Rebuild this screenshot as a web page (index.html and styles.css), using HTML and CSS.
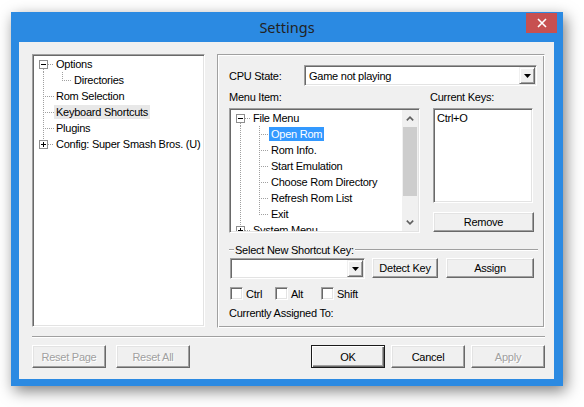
FILE: index.html
```html
<!DOCTYPE html>
<html>
<head>
<meta charset="utf-8">
<title>Settings</title>
<link rel="stylesheet" href="styles.css">
</head>
<body>
<div class="page">
  <div class="window">
    <div class="titlebar">
      <div></div>
      <div class="title">Settings</div>
      <div class="close"><svg width="10" height="10" viewBox="0 0 10 10"><path d="M1 1L9 9M9 1L1 9" stroke="#fff" stroke-width="1.6"/></svg></div>
    </div>
    <div class="client">
      <div class="top">
        <div class="tree sunken">
          <div class="node"><svg class="gut" width="20" height="16"><path class="dot" d="M9.5 13V16M14 8.5H20"/><rect class="box" x="5.5" y="4.5" width="8" height="8"/><path class="sign" d="M7 8.5H12"/></svg><span class="lbl">Options</span></div>
          <div class="node"><svg class="gut" width="38" height="16"><path class="dot" d="M9.5 0V16M28.5 0V8.5M30 8.5H38"/></svg><span class="lbl">Directories</span></div>
          <div class="node"><svg class="gut" width="20" height="16"><path class="dot" d="M9.5 0V16M11 8.5H20"/></svg><span class="lbl">Rom Selection</span></div>
          <div class="node"><svg class="gut" width="20" height="16"><path class="dot" d="M9.5 0V16M11 8.5H20"/></svg><span class="lbl hot">Keyboard Shortcuts</span></div>
          <div class="node"><svg class="gut" width="20" height="16"><path class="dot" d="M9.5 0V16M11 8.5H20"/></svg><span class="lbl">Plugins</span></div>
          <div class="node"><svg class="gut" width="20" height="16"><path class="dot" d="M9.5 0V4M14 8.5H20"/><rect class="box" x="5.5" y="4.5" width="8" height="8"/><path class="sign" d="M7 8.5H12M9.5 6V11"/></svg><span class="lbl">Config: Super Smash Bros. (U)</span></div>
        </div>
        <div class="group">
          <div class="cpu-row">
            <span class="cpu-label">CPU State:</span>
            <div class="combo sunken cpu-combo">
              <span class="combo-text">Game not playing</span>
              <div class="drop"><svg width="7" height="4" viewBox="0 0 7 4"><path d="M0 0H7L3.5 4Z" fill="#000"/></svg></div>
            </div>
          </div>
          <div class="mid-row">
            <div class="menu-col">
              <div class="label">Menu Item:</div>
              <div class="mtree sunken">
                <div class="mtree-body">
                  <div class="node"><svg class="gut" width="20" height="16"><path class="dot" d="M9.5 13V16M14 8.5H20"/><rect class="box" x="5.5" y="4.5" width="8" height="8"/><path class="sign" d="M7 8.5H12"/></svg><span class="lbl">File Menu</span></div>
                  <div class="node"><svg class="gut" width="38" height="16"><path class="dot" d="M9.5 0V16M28.5 0V16M30 8.5H38"/></svg><span class="lbl sel">Open Rom</span></div>
                  <div class="node"><svg class="gut" width="38" height="16"><path class="dot" d="M9.5 0V16M28.5 0V16M30 8.5H38"/></svg><span class="lbl">Rom Info.</span></div>
                  <div class="node"><svg class="gut" width="38" height="16"><path class="dot" d="M9.5 0V16M28.5 0V16M30 8.5H38"/></svg><span class="lbl">Start Emulation</span></div>
                  <div class="node"><svg class="gut" width="38" height="16"><path class="dot" d="M9.5 0V16M28.5 0V16M30 8.5H38"/></svg><span class="lbl">Choose Rom Directory</span></div>
                  <div class="node"><svg class="gut" width="38" height="16"><path class="dot" d="M9.5 0V16M28.5 0V16M30 8.5H38"/></svg><span class="lbl">Refresh Rom List</span></div>
                  <div class="node"><svg class="gut" width="38" height="16"><path class="dot" d="M9.5 0V16M28.5 0V8.5M30 8.5H38"/></svg><span class="lbl">Exit</span></div>
                  <div class="node"><svg class="gut" width="20" height="16"><path class="dot" d="M9.5 0V4M9.5 13V16M14 8.5H20"/><rect class="box" x="5.5" y="4.5" width="8" height="8"/><path class="sign" d="M7 8.5H12M9.5 6V11"/></svg><span class="lbl">System Menu</span></div>
                </div>
                <div class="vscroll">
                  <div class="arrow"><svg width="8" height="5" viewBox="0 0 8 5"><path d="M0.8 4.4L4 1.2L7.2 4.4" fill="none" stroke="#606060" stroke-width="1.6"/></svg></div>
                  <div class="track"><div class="thumb"></div></div>
                  <div class="arrow"><svg width="8" height="5" viewBox="0 0 8 5"><path d="M0.8 0.6L4 3.8L7.2 0.6" fill="none" stroke="#606060" stroke-width="1.6"/></svg></div>
                </div>
              </div>
            </div>
            <div class="keys-col">
              <div class="label">Current Keys:</div>
              <div class="listbox sunken"><div class="item">Ctrl+O</div></div>
              <button class="btn remove">Remove</button>
            </div>
          </div>
          <div class="legend">
            <span class="etch dash"></span>
            <span class="legend-text">Select New Shortcut Key:</span>
            <span class="etch fill"></span>
          </div>
          <div class="key-row">
            <div class="combo sunken key-combo">
              <span class="combo-text"></span>
              <div class="drop"><svg width="7" height="4" viewBox="0 0 7 4"><path d="M0 0H7L3.5 4Z" fill="#000"/></svg></div>
            </div>
            <button class="btn detect">Detect Key</button>
            <button class="btn assign">Assign</button>
          </div>
          <div class="check-row">
            <label class="check c-ctrl"><span class="cbox"></span>Ctrl</label>
            <label class="check c-alt"><span class="cbox"></span>Alt</label>
            <label class="check c-shift"><span class="cbox"></span>Shift</label>
          </div>
          <div class="assigned">Currently Assigned To:</div>
        </div>
      </div>
      <div class="sep"></div>
      <div class="buttons">
        <button class="btn dis">Reset Page</button>
        <button class="btn dis">Reset All</button>
        <div class="spacer"></div>
        <button class="btn def">OK</button>
        <button class="btn">Cancel</button>
        <button class="btn dis">Apply</button>
      </div>
    </div>
  </div>
</div>
</body>
</html>
```
FILE: styles.css
```css
* { box-sizing: border-box; }
html, body { margin: 0; padding: 0; background: #fff; }
body {
  width: 584px;
  height: 407px;
  overflow: hidden;
  font-family: "Liberation Sans", Arial, sans-serif;
  font-size: 11px;
  letter-spacing: -0.25px;
  color: #000;
}
.page { padding: 12px 0 0 11px; }
.window {
  width: 552px;
  height: 374px;
  background: #2b8ae2;
  display: flex;
  flex-direction: column;
  box-shadow: 3px 5px 14px rgba(0,0,0,0.5);
}
.titlebar {
  height: 30px;
  display: grid;
  grid-template-columns: 1fr auto 1fr;
  align-items: start;
}
.title {
  font-family: "Noto Sans", "Open Sans", sans-serif;
  font-size: 14.5px;
  letter-spacing: 0;
  color: #222;
  line-height: 30px;
}
.close {
  justify-self: end;
  margin: 1px 6px 0 0;
  width: 31px;
  height: 20px;
  background: #c75050;
  display: flex;
  align-items: center;
  justify-content: center;
}
.close svg { display: block; }
.client {
  flex: 1;
  margin: 0 9px 7px 8px;
  background: #f0f0f0;
  padding: 12px 9px 0 13px;
}
.top {
  display: flex;
  align-items: flex-start;
  gap: 12px;
}
.sunken {
  border: 1px solid;
  border-color: #a0a0a0 #fff #fff #a0a0a0;
  box-shadow: inset 1px 1px #696969, inset -1px -1px #e3e3e3;
}
.tree {
  width: 173px;
  height: 273px;
  background: #fff;
  padding: 1px;
}
.node {
  display: flex;
  align-items: flex-start;
  height: 16px;
  white-space: nowrap;
}
.gut { display: block; flex: none; }
.dot { fill: none; stroke: #a0a0a0; stroke-width: 1; stroke-dasharray: 1 1; shape-rendering: crispEdges; }
.box { fill: #fff; stroke: #8e8e8e; stroke-width: 1; shape-rendering: crispEdges; }
.sign { stroke: #000; stroke-width: 1; shape-rendering: crispEdges; }
.lbl {
  margin-top: 1px;
  height: 14px;
  line-height: 14px;
  padding: 0 2px;
}
.lbl.hot { background: #e8e8e8; }
.lbl.sel { background: #3399ff; color: #fff; }

.group {
  width: 328px;
  height: 274px;
  border: 1px solid;
  border-color: #a0a0a0 #fff #fff #a0a0a0;
  box-shadow: inset 1px 1px #fff, inset -1px -1px #a0a0a0;
  padding: 10px 7px 0 11px;
}
.cpu-row {
  display: flex;
  align-items: center;
  height: 21px;
}
.cpu-label { width: 75px; flex: none; }
.combo {
  display: flex;
  align-items: center;
  background: #fff;
  height: 21px;
  padding: 1px;
}
.cpu-combo { flex: 1; }
.combo-text { flex: 1; padding-left: 3px; white-space: nowrap; }
.drop {
  width: 16px;
  height: 17px;
  background: #f0f0f0;
  border: 1px solid;
  border-color: #f0f0f0 #696969 #696969 #f0f0f0;
  box-shadow: inset 1px 1px #fff, inset -1px -1px #a0a0a0;
  display: flex;
  align-items: center;
  justify-content: center;
}
.drop svg { display: block; }

.mid-row { display: flex; align-items: flex-start; }
.menu-col { width: 191px; flex: none; }
.label { padding-top: 5px; height: 22px; line-height: 13px; white-space: nowrap; }
.mtree {
  height: 125px;
  background: #fff;
  padding: 1px;
  display: flex;
}
.mtree-body { flex: 1; overflow: hidden; }
.vscroll {
  width: 16px;
  flex: none;
  background: #f0f0f0;
  display: flex;
  flex-direction: column;
}
.arrow { height: 17px; display: flex; align-items: center; justify-content: center; }
.arrow svg { display: block; }
.track { flex: 1; }
.thumb { height: 69px; background: #cdcdcd; margin: 0 1px; }

.keys-col { margin-left: 10px; flex: 1; }
.listbox {
  margin-left: 3px;
  width: 100px;
  height: 95px;
  background: #fff;
  padding: 2px 3px;
}
.item { line-height: 14px; }

.btn {
  font-family: "Liberation Sans", Arial, sans-serif;
  font-size: 11px;
  letter-spacing: -0.25px;
  color: #000;
  background: #f0f0f0;
  border: 1px solid;
  border-color: #fff #696969 #696969 #fff;
  box-shadow: inset -1px -1px #a0a0a0, inset 1px 1px #e3e3e3;
  padding: 0;
  margin: 0;
  display: flex;
  align-items: center;
  justify-content: center;
  white-space: nowrap;
}
.remove { margin: 9px 0 0 3px; width: 101px; height: 20px; }

.legend {
  display: flex;
  align-items: center;
  height: 14px;
  margin-top: 10px;
}
.etch { height: 2px; border-top: 1px solid #a0a0a0; border-bottom: 1px solid #fff; }
.dash { width: 5px; flex: none; }
.legend-text { padding: 0 1px; white-space: nowrap; }
.etch.fill { flex: 1; margin-right: -1px; }

.key-row {
  display: flex;
  align-items: flex-start;
  margin-top: 1px;
}
.key-combo { margin-left: 1px; width: 135px; }
.detect { margin-left: 7px; width: 66px; height: 20px; }
.assign { margin-left: 8px; width: 88px; height: 20px; }

.check-row {
  display: flex;
  align-items: center;
  height: 13px;
  margin-top: 8px;
  padding-left: 1px;
}
.check { display: flex; align-items: center; white-space: nowrap; }
.c-ctrl { width: 45px; }
.c-alt { width: 46px; }
.cbox {
  width: 13px;
  height: 13px;
  margin-right: 3px;
  background: #fff;
  border: 1px solid;
  border-color: #a0a0a0 #fff #fff #a0a0a0;
  box-shadow: inset 1px 1px #696969, inset -1px -1px #e3e3e3;
}
.assigned { margin-top: 7px; line-height: 13px; }

.sep {
  margin-top: 8px;
  height: 2px;
  border-top: 1px solid #a0a0a0;
  border-bottom: 1px solid #fff;
}
.buttons {
  display: flex;
  margin-top: 7px;
  gap: 10px;
}
.buttons .btn { width: 74px; height: 23px; }
.buttons .spacer { flex: 1; }
.btn.def {
  border: 1px solid #1a1a1a;
  box-shadow: inset 1px 1px #fff, inset -1px -1px #696969, inset -2px -2px #a0a0a0;
}
.btn.dis { color: #a0a0a0; text-shadow: 1px 1px #fff; }
.buttons .btn.def { margin-right: -4px; }
.buttons .btn.def + .btn { margin-right: -4px; }
```
